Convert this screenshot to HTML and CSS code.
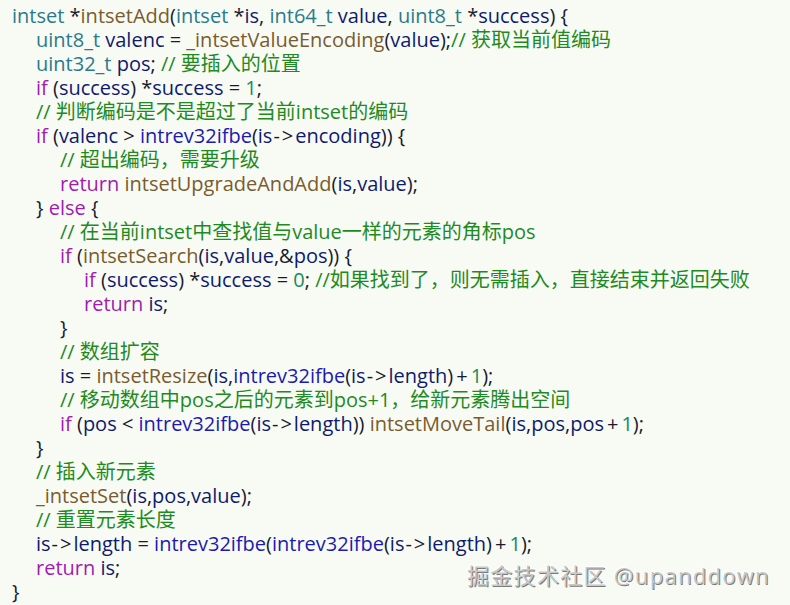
FILE: index.html
```html
<!DOCTYPE html>
<html lang="zh">
<head>
<meta charset="utf-8">
<link rel="stylesheet" href="styles.css">
</head>
<body>
<div class="code">
<div class="ln"><span class="ty">intset</span> *<span class="fn">intsetAdd</span>(<span class="ty">intset</span> *<span class="v">is</span>, <span class="ty">int64_t</span> <span class="v">value</span>, <span class="ty">uint8_t</span> *<span class="v">success</span>) {</div>
<div class="ln i1"><span class="ty">uint8_t</span> <span class="v">valenc</span> = <span class="fn">_intsetValueEncoding</span>(<span class="v">value</span>);<span class="c">// 获取当前值编码</span></div>
<div class="ln i1"><span class="ty">uint32_t</span> <span class="v">pos</span>; <span class="c">// 要插入的位置</span></div>
<div class="ln i1"><span class="k">if</span> (<span class="v">success</span>) *<span class="v">success</span> = <span class="n">1</span>;</div>
<div class="ln i1"><span class="c">// 判断编码是不是超过了当前intset的编码</span></div>
<div class="ln i1"><span class="k">if</span> (<span class="v">valenc</span> &gt; <span class="m">intrev32ifbe</span>(<span class="v">is</span><span class="ar">-&gt;</span><span class="v">encoding</span>)) {</div>
<div class="ln i2"><span class="c">// 超出编码，需要升级</span></div>
<div class="ln i2"><span class="k">return</span> <span class="fn">intsetUpgradeAndAdd</span>(<span class="v">is</span>,<span class="v">value</span>);</div>
<div class="ln i1">} <span class="k">else</span> {</div>
<div class="ln i2"><span class="c">// 在当前intset中查找值与value一样的元素的角标pos</span></div>
<div class="ln i2"><span class="k">if</span> (<span class="fn">intsetSearch</span>(<span class="v">is</span>,<span class="v">value</span>,&amp;<span class="v">pos</span>)) {</div>
<div class="ln i3"><span class="k">if</span> (<span class="v">success</span>) *<span class="v">success</span> = <span class="n">0</span>; <span class="c">//如果找到了，则无需插入，直接结束并返回失败</span></div>
<div class="ln i3"><span class="k">return</span> <span class="v">is</span>;</div>
<div class="ln i2">}</div>
<div class="ln i2"><span class="c">// 数组扩容</span></div>
<div class="ln i2"><span class="v">is</span> = <span class="fn">intsetResize</span>(<span class="v">is</span>,<span class="m">intrev32ifbe</span>(<span class="v">is</span><span class="ar">-&gt;</span><span class="v">length</span>)<span class="op">+</span><span class="n">1</span>);</div>
<div class="ln i2"><span class="c">// 移动数组中pos之后的元素到pos+1，给新元素腾出空间</span></div>
<div class="ln i2"><span class="k">if</span> (<span class="v">pos</span> &lt; <span class="m">intrev32ifbe</span>(<span class="v">is</span><span class="ar">-&gt;</span><span class="v">length</span>)) <span class="fn">intsetMoveTail</span>(<span class="v">is</span>,<span class="v">pos</span>,<span class="v">pos</span><span class="op">+</span><span class="n">1</span>);</div>
<div class="ln i1">}</div>
<div class="ln i1"><span class="c">// 插入新元素</span></div>
<div class="ln i1"><span class="fn">_intsetSet</span>(<span class="v">is</span>,<span class="v">pos</span>,<span class="v">value</span>);</div>
<div class="ln i1"><span class="c">// 重置元素长度</span></div>
<div class="ln i1"><span class="v">is</span><span class="ar">-&gt;</span><span class="v">length</span> = <span class="m">intrev32ifbe</span>(<span class="m">intrev32ifbe</span>(<span class="v">is</span><span class="ar">-&gt;</span><span class="v">length</span>)<span class="op">+</span><span class="n">1</span>);</div>
<div class="ln i1"><span class="k">return</span> <span class="v">is</span>;</div>
<div class="ln">}</div>
<div class="wm">掘金技术社区 @upanddown</div>
</div>
</body>
</html>
```
FILE: styles.css
```css
html, body {
  margin: 0;
  padding: 0;
  background: #f7fbf4;
}
.code {
  position: relative;
  width: 790px;
  height: 605px;
  box-sizing: border-box;
  padding: 4px 0 0 12px;
  font-family: "Open Sans", "Noto Sans CJK SC", sans-serif;
  font-size: 20px;
  line-height: 24px;
  color: #1a1a2e;
}
.ln { height: 24px; white-space: pre; }
.i1 { padding-left: 24px; }
.i2 { padding-left: 48px; }
.i3 { padding-left: 72px; }
.ty { color: #2b7a8c; }
.fn { color: #7a5c2e; }
.v { color: #0f1a6e; }
.k { color: #a11caf; }
.c { color: #1f8a1f; }
.n { color: #1a8a5a; }
.m { color: #1c1ab0; }
.op { padding: 0 3px; }
.ar { letter-spacing: 2px; padding-left: 1px; }
.wm {
  position: absolute;
  left: 467px;
  top: 561px;
  font-size: 22px;
  line-height: 28px;
  letter-spacing: 1.3px;
  color: #c8c8c8;
  white-space: pre;
  text-shadow: 1px 1px 0 #7a7a7a, -1px -1px 0 #ffffff;
}
```
